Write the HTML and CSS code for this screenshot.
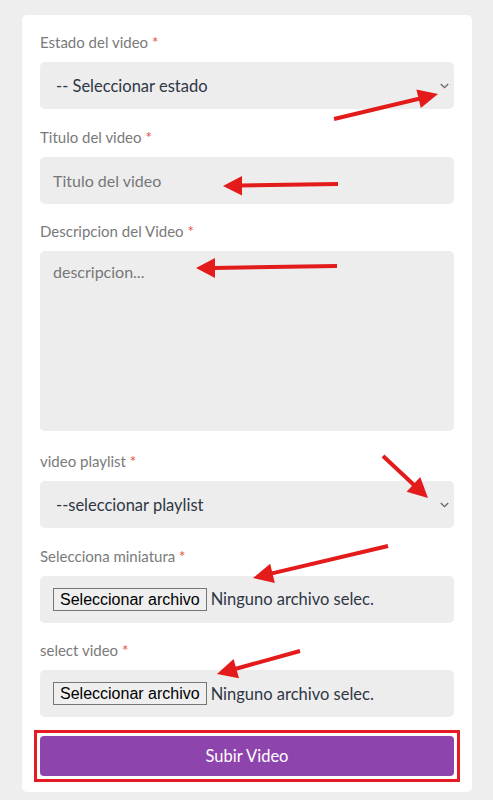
FILE: index.html
```html
<!DOCTYPE html>
<html lang="es">
<head>
<meta charset="utf-8">
<title>Subir Video</title>
<link rel="stylesheet" href="styles.css">
</head>
<body>
<form class="card">
  <div class="group">
    <div class="label">Estado del video <span class="req">*</span></div>
    <div class="field select">
      <span class="value">-- Seleccionar estado</span>
      <svg class="chev" width="9" height="6" viewBox="0 0 9 6"><path d="M0.8 1l3.7 3.6 3.7-3.6" fill="none" stroke="#666" stroke-width="1.3"/></svg>
    </div>
  </div>
  <div class="group">
    <div class="label">Titulo del video <span class="req">*</span></div>
    <div class="field input"><span class="placeholder">Titulo del video</span></div>
  </div>
  <div class="group group-tall">
    <div class="label">Descripcion del Video <span class="req">*</span></div>
    <div class="field textarea"><span class="placeholder">descripcion...</span></div>
  </div>
  <div class="group">
    <div class="label">video playlist <span class="req">*</span></div>
    <div class="field select">
      <span class="value">--seleccionar playlist</span>
      <svg class="chev" width="9" height="6" viewBox="0 0 9 6"><path d="M0.8 1l3.7 3.6 3.7-3.6" fill="none" stroke="#666" stroke-width="1.3"/></svg>
    </div>
  </div>
  <div class="group">
    <div class="label">Selecciona miniatura <span class="req">*</span></div>
    <div class="field file">
      <span class="file-btn">Seleccionar archivo</span>
      <span class="file-name">Ninguno archivo selec.</span>
    </div>
  </div>
  <div class="group group-last">
    <div class="label">select video <span class="req">*</span></div>
    <div class="field file">
      <span class="file-btn">Seleccionar archivo</span>
      <span class="file-name">Ninguno archivo selec.</span>
    </div>
  </div>
  <div class="submit-wrap">
    <button type="button" class="submit">Subir Video</button>
  </div>
</form>
<svg class="annotations" width="493" height="800" viewBox="0 0 493 800">
  <g stroke="#e41b1b" stroke-width="4" stroke-linecap="butt" fill="none">
    <line x1="334" y1="119" x2="419" y2="98.7"/>
    <line x1="338" y1="184" x2="241" y2="185.5"/>
    <line x1="337" y1="266" x2="214" y2="268"/>
    <line x1="383" y1="456" x2="414" y2="485"/>
    <line x1="388" y1="546" x2="272" y2="573.4"/>
    <line x1="300" y1="651" x2="236" y2="668.7"/>
  </g>
  <g fill="#e41b1b">
    <polygon points="438,94 420.8,107.9 416.4,89.5"/>
    <polygon points="223,186 242,176 242,195.5"/>
    <polygon points="196,268 215,258 215,278"/>
    <polygon points="428,498 406.6,491.7 420.2,477.1"/>
    <polygon points="253,578 274.8,583.1 270.2,563.7"/>
    <polygon points="217,674 239,678.3 233.6,659.1"/>
  </g>
</svg>
</body>
</html>
```
FILE: styles.css
```css
html, body {
  margin: 0;
  padding: 0;
}
body {
  background: #eeeeee;
  padding: 15px 21px 7px 22px;
  font-family: Lato, "Noto Sans", sans-serif;
  position: relative;
  min-height: 778px;
}
.card {
  background: #ffffff;
  border-radius: 5px;
  padding: 17px 18px 10px 18px;
  display: flex;
  flex-direction: column;
}
.group {
  display: flex;
  flex-direction: column;
  margin-bottom: 17.5px;
}
.group-tall {
  margin-bottom: 20px;
}
.group-last {
  margin-bottom: 13px;
}
.label {
  font-size: 15px;
  line-height: 20px;
  color: #7a7a7a;
  margin-bottom: 10px;
}
.req {
  color: #e74c3c;
}
.field {
  background: #ededed;
  border-radius: 5px;
  height: 47px;
  display: flex;
  align-items: center;
  box-sizing: border-box;
}
.select {
  padding: 0 5px 0 16px;
  justify-content: space-between;
}
.value {
  font-size: 16.5px;
  color: #2f3745;
}
.chev {
  display: block;
}
.input {
  padding: 0 13px;
}
.placeholder {
  font-size: 16px;
  color: #777777;
}
.textarea {
  height: 180px;
  align-items: flex-start;
  padding: 11px 13px;
}
.file {
  padding: 0 13px;
  gap: 4px;
}
.file-btn {
  font-family: "Liberation Sans", Arial, sans-serif;
  font-size: 16px;
  line-height: 19px;
  color: #000;
  background: #efefef;
  border: 1px solid #767676;
  padding: 1px 6px;
}
.file-name {
  font-size: 16.5px;
  color: #2f3745;
}
.submit-wrap {
  margin: 0 -6px;
  border: 3px solid #e41b23;
  padding: 3px;
  display: flex;
  flex-direction: column;
}
.submit {
  font-family: Lato, "Noto Sans", sans-serif;
  font-size: 16.5px;
  color: #ffffff;
  background: #8e44ad;
  border: none;
  border-radius: 4px;
  height: 40px;
  cursor: pointer;
}
.annotations {
  position: absolute;
  left: 0;
  top: 0;
  pointer-events: none;
}
```
